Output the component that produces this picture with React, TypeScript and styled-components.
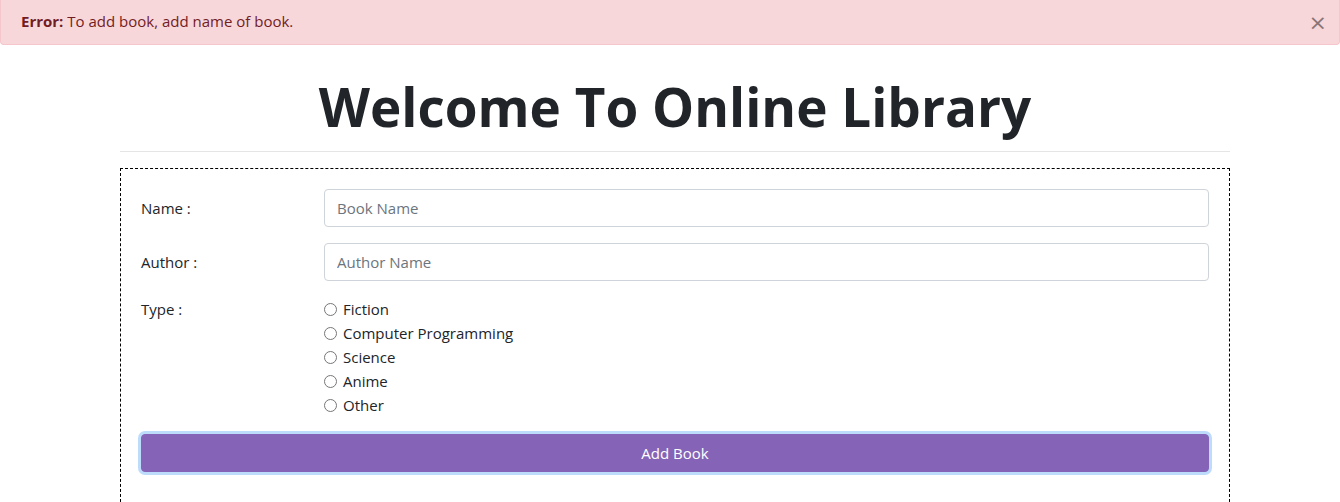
import React, { useState } from "react";
import styled, { createGlobalStyle } from "styled-components";

const GlobalStyle = createGlobalStyle`
  * { box-sizing: border-box; }
  body {
    margin: 0;
    font-family: "Open Sans", "Noto Sans", sans-serif;
    font-size: 15px;
    line-height: 24px;
    color: #212529;
    background: #fff;
  }
`;

const Alert = styled.div`
  display: flex;
  justify-content: space-between;
  align-items: center;
  height: 45px;
  padding: 0 20px 2px 20px;
  background: #f8d7da;
  border: 1px solid #f5c6cb;
  border-top: none;
  border-radius: 0 0 4px 4px;
  color: #721c24;
`;

const CloseButton = styled.button`
  border: none;
  background: transparent;
  padding: 0;
  font-family: "DejaVu Sans", sans-serif;
  font-size: 22px;
  font-weight: 400;
  line-height: 1;
  color: #000;
  opacity: 0.45;
  cursor: pointer;
  margin-right: -8px;
  margin-top: 3px;
`;

const Container = styled.div`
  width: 1120px;
  margin: 0 auto;
  padding-left: 10px;
`;

const Title = styled.h1`
  margin: 18px 0 0;
  text-align: center;
  font-size: 53px;
  font-weight: 700;
  line-height: 88px;
  color: #212529;
`;

const Rule = styled.hr`
  margin: 0 0 16px;
  border: none;
  border-top: 1px solid #e5e5e5;
`;

const FormBox = styled.form`
  border: 1px dashed #000;
  border-bottom: none;
  padding: 20px 20px 40px 20px;
  display: flex;
  flex-direction: column;
  gap: 16px;
`;

const Row = styled.div<{ $top?: boolean }>`
  display: grid;
  grid-template-columns: 183px 1fr;
  align-items: ${(p) => (p.$top ? "start" : "center")};
`;

const Label = styled.label`
  color: #212529;
`;

const Input = styled.input`
  height: 38px;
  width: 100%;
  padding: 6px 12px;
  border: 1px solid #ced4da;
  border-radius: 4px;
  font: inherit;
  color: #495057;
  &::placeholder { color: #6c757d; }
`;

const RadioList = styled.div`
  display: flex;
  flex-direction: column;
`;

const RadioItem = styled.label`
  display: flex;
  align-items: center;
  height: 24px;
  gap: 6px;
  input { margin: 0; width: 13px; height: 13px; }
`;

const SubmitButton = styled.button`
  height: 38px;
  margin-top: 1px;
  border: 1px solid #8563b6;
  border-radius: 4px;
  background: #8563b6;
  color: #fff;
  font: inherit;
  box-shadow: 0 0 0 3px #bddcfc;
  cursor: pointer;
`;

const types = ["Fiction", "Computer Programming", "Science", "Anime", "Other"];

export default function App() {
  const [shown, setShown] = useState(true);
  return (
    <>
      <GlobalStyle />
      {shown && (
        <Alert>
          <span>
            <strong>Error:</strong> To add book, add name of book.
          </span>
          <CloseButton onClick={() => setShown(false)}>×</CloseButton>
        </Alert>
      )}
      <Container>
        <Title>Welcome To Online Library</Title>
        <Rule />
        <FormBox onSubmit={(e) => e.preventDefault()}>
          <Row>
            <Label>Name :</Label>
            <Input placeholder="Book Name" />
          </Row>
          <Row>
            <Label>Author :</Label>
            <Input placeholder="Author Name" />
          </Row>
          <Row $top>
            <Label>Type :</Label>
            <RadioList>
              {types.map((t) => (
                <RadioItem key={t}>
                  <input type="radio" name="type" value={t} />
                  {t}
                </RadioItem>
              ))}
            </RadioList>
          </Row>
          <SubmitButton type="submit">Add Book</SubmitButton>
        </FormBox>
      </Container>
    </>
  );
}
